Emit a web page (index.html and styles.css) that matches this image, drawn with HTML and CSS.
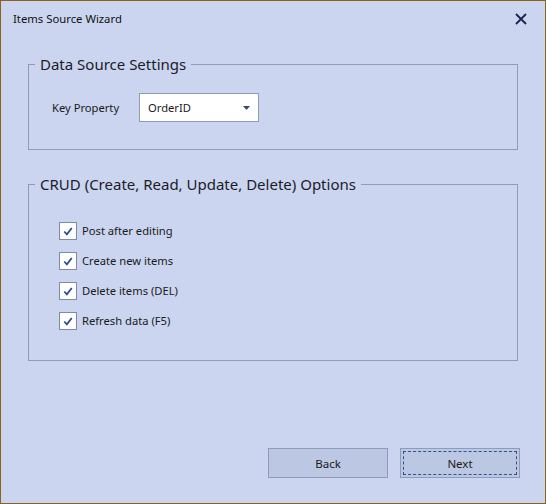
FILE: index.html
```html
<!DOCTYPE html>
<html>
<head>
<meta charset="utf-8">
<link rel="stylesheet" href="styles.css">
</head>
<body>
<div class="window">
  <div class="titlebar">
    <span class="title">Items Source Wizard</span>
    <svg class="close" width="12" height="12" viewBox="0 0 12 12"><path d="M1 1 L11 11 M11 1 L1 11" stroke="#1c2350" stroke-width="1.8" fill="none"/></svg>
  </div>
  <div class="content">
    <fieldset class="group group-ds">
      <legend class="legend">Data Source Settings</legend>
      <div class="row">
        <span class="label">Key Property</span>
        <div class="combo">
          <span class="combo-text">OrderID</span>
          <svg class="combo-arrow" width="7" height="4" viewBox="0 0 7 4"><path d="M0 0 H7 L3.5 4 Z" fill="#3a4a6e"/></svg>
        </div>
      </div>
    </fieldset>
    <fieldset class="group group-crud">
      <legend class="legend">CRUD (Create, Read, Update, Delete) Options</legend>
      <div class="checks">
        <div class="check-row"><span class="box"><svg width="17" height="17" viewBox="0 0 17 17"><path d="M4.5 8.5 L7.3 11.5 L12.5 4.8" stroke="#2b4c8c" stroke-width="1.9" fill="none"/></svg></span><span class="check-label">Post after editing</span></div>
        <div class="check-row"><span class="box"><svg width="17" height="17" viewBox="0 0 17 17"><path d="M4.5 8.5 L7.3 11.5 L12.5 4.8" stroke="#2b4c8c" stroke-width="1.9" fill="none"/></svg></span><span class="check-label">Create new items</span></div>
        <div class="check-row"><span class="box"><svg width="17" height="17" viewBox="0 0 17 17"><path d="M4.5 8.5 L7.3 11.5 L12.5 4.8" stroke="#2b4c8c" stroke-width="1.9" fill="none"/></svg></span><span class="check-label">Delete items (DEL)</span></div>
        <div class="check-row"><span class="box"><svg width="17" height="17" viewBox="0 0 17 17"><path d="M4.5 8.5 L7.3 11.5 L12.5 4.8" stroke="#2b4c8c" stroke-width="1.9" fill="none"/></svg></span><span class="check-label">Refresh data (F5)</span></div>
      </div>
    </fieldset>
    <div class="buttons">
      <div class="btn">Back</div>
      <div class="btn btn-focus"><span class="focus-ring">Next</span></div>
    </div>
  </div>
</div>
</body>
</html>
```
FILE: styles.css
```css
* { box-sizing: border-box; }
html, body { margin: 0; padding: 0; }
body {
  width: 546px;
  height: 504px;
  font-family: "Segoe UI", "Noto Sans", "Open Sans", sans-serif;
  color: #1a1a1a;
}
.window {
  width: 546px;
  height: 504px;
  border: 1px solid #8c6419;
  background: #cbd5ef;
  display: flex;
  flex-direction: column;
}
.titlebar {
  height: 34px;
  display: flex;
  align-items: center;
  justify-content: space-between;
  padding: 0 18px 0 12px;
}
.title {
  font-size: 11.3px;
  color: #111;
}
.close { display: block; margin-top: 1px; }
.content {
  flex: 1;
  display: flex;
  flex-direction: column;
  padding: 19px 25px 25px 27px;
}
.group {
  margin: 0;
  width: 490px;
  border: 1px solid #8f9bbb;
  padding: 0;
}
.legend {
  font-size: 15px;
  line-height: 20px;
  padding: 0 5px 0 5px;
  margin-left: 6px;
  color: #1c1c28;
}
.group-ds { padding: 19px 0 27px 0; }
.row {
  display: flex;
  align-items: center;
  height: 29px;
  margin-left: 23px;
}
.label {
  font-size: 11.2px;
  width: 87px;
}
.combo {
  width: 120px;
  height: 29px;
  background: #fff;
  border: 1px solid #8f9bbb;
  display: flex;
  align-items: center;
  justify-content: space-between;
  padding: 0 8px 0 8px;
}
.combo-text { font-size: 11.2px; }
.combo-arrow { display: block; }
.group-crud {
  margin-top: 24px;
  padding: 28px 0 30px 0;
}
.checks {
  display: flex;
  flex-direction: column;
  gap: 12px;
  margin-left: 30px;
}
.check-row {
  display: flex;
  align-items: center;
  height: 18px;
}
.box {
  width: 18px;
  height: 18px;
  background: #fff;
  border: 1px solid #7d8aa8;
  display: flex;
  align-items: center;
  justify-content: center;
  margin-right: 5px;
}
.box svg { display: block; }
.check-label { font-size: 11.2px; margin-top: -1px; }
.buttons {
  margin-top: auto;
  display: flex;
  justify-content: flex-end;
  gap: 12px;
}
.btn {
  width: 120px;
  height: 30px;
  background: #bcc7e3;
  border: 1px solid #8f9bbb;
  display: flex;
  align-items: center;
  justify-content: center;
  font-size: 11.5px;
  padding: 2px;
}
.focus-ring {
  width: 100%;
  height: 100%;
  border: 1px dashed #2f4f8f;
  display: flex;
  align-items: center;
  justify-content: center;
}
```
